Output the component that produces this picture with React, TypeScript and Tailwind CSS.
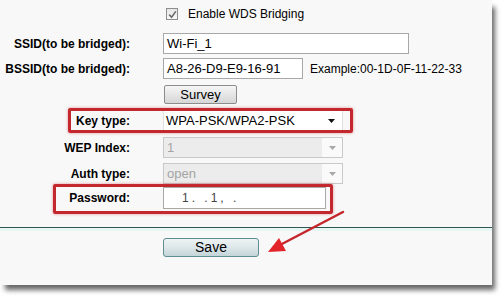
import React from 'react';

const font = { fontFamily: '"Liberation Sans", Arial, sans-serif' };

function Label({ children }: { children: React.ReactNode }) {
  return (
    <div className="w-[130px] shrink-0 text-right text-[12px] font-bold text-black leading-none">
      {children}
    </div>
  );
}

function Arrow({ disabled }: { disabled?: boolean }) {
  return (
    <svg width="7" height="4" viewBox="0 0 7 4" className="shrink-0">
      <path d="M0 0 L7 0 L3.5 4 Z" fill={disabled ? '#a8a8a8' : '#111'} />
    </svg>
  );
}

function DisabledSelect({ value }: { value: string }) {
  return (
    <div className="ml-[33px] flex h-[21px] w-[180px] border border-[#c9c9c9] bg-[#fafafa]">
      <div className="flex flex-1 items-center bg-[#ececec] pl-[3px] text-[13px] text-[#a3a3a3]">
        {value}
      </div>
      <div className="flex w-[20px] items-center justify-center">
        <Arrow disabled />
      </div>
    </div>
  );
}

export default function App() {
  return (
    <div className="w-[502px] h-[296px] bg-white overflow-hidden" style={font}>
      <div className="relative w-[492px] h-[285px] bg-[#f8f8f8] shadow-[4px_6px_5px_-1px_rgba(0,0,0,0.6)]">
        <div className="flex flex-col pt-[7px]">
          {/* enable wds */}
          <div className="flex h-[14px] items-center pl-[166px]">
            <div className="flex h-[12px] w-[12px] items-center justify-center border border-[#8d8d8d] bg-gradient-to-b from-[#e6e6e6] to-[#fafafa]">
              <svg width="9" height="9" viewBox="0 0 9 9">
                <path d="M1.2 4.6 L3.6 7.2 L7.8 1.4" stroke="#6b6b6b" strokeWidth="1.6" fill="none" />
              </svg>
            </div>
            <span className="ml-[10px] text-[12px] text-black">Enable WDS Bridging</span>
          </div>

          <div className="mt-[12px] flex h-[21px] items-center">
            <Label>SSID(to be bridged):</Label>
            <div className="ml-[33px] flex h-[21px] w-[246px] items-center border border-[#a8a8a8] bg-white pl-[3px] text-[13px] text-black">
              Wi-Fi_1
            </div>
          </div>

          <div className="mt-[4px] flex h-[21px] items-center">
            <Label>BSSID(to be bridged):</Label>
            <div className="ml-[33px] flex h-[21px] w-[140px] items-center border border-[#a8a8a8] bg-white pl-[3px] text-[13px] text-black">
              A8-26-D9-E9-16-91
            </div>
            <span className="ml-[7px] text-[12px] text-black">Example:00-1D-0F-11-22-33</span>
          </div>

          <div className="mt-[6px] flex h-[19px] items-center pl-[164px]">
            <div className="flex h-[19px] w-[73px] items-center justify-center rounded-[2px] border border-[#8c8c8c] bg-gradient-to-b from-[#f6f6f6] to-[#d6d6d6] text-[13px] text-black">
              Survey
            </div>
          </div>

          <div className="mt-[6px] flex h-[21px] items-center">
            <Label>Key type:</Label>
            <div className="ml-[33px] flex h-[21px] w-[180px] items-center justify-between border border-[#e0e0e0] bg-white pl-[2px] pr-[7px] text-[13px] text-black">
              WPA-PSK/WPA2-PSK
              <Arrow />
            </div>
          </div>

          <div className="mt-[6px] flex h-[21px] items-center">
            <Label>WEP Index:</Label>
            <DisabledSelect value="1" />
          </div>

          <div className="mt-[5px] flex h-[21px] items-center">
            <Label>Auth type:</Label>
            <DisabledSelect value="open" />
          </div>

          <div className="mt-[3px] flex h-[22px] items-center">
            <Label>Password:</Label>
            <div className="ml-[33px] flex h-[22px] w-[163px] items-center border border-[#a8a8a8] bg-white pl-[18px] text-[12px] text-[#444] tracking-[3px]">
              1. .1, .
            </div>
          </div>

          {/* divider */}
          <div className="mt-[18px] h-[1px] w-full bg-[#2f5650]" />
          <div className="h-[3px] w-full bg-[#e6f6f3]" />

          <div className="mt-[7px] flex h-[19px] items-center pl-[163px]">
            <div className="flex h-[19px] w-[96px] items-center justify-center rounded-[3px] border border-[#5e8d92] bg-gradient-to-b from-[#eef3f4] via-[#dde7ea] to-[#c4d4d8] text-[14px] text-black">
              Save
            </div>
          </div>
        </div>

        {/* annotations */}
        <div className="absolute left-[68px] top-[108px] h-[25px] w-[285px] rounded-[2px] border-[3px] border-[#c4282f] shadow-[0_0_3px_rgba(200,40,40,0.5)]" />
        <div className="absolute left-[53px] top-[184px] h-[30px] w-[280px] rounded-[2px] border-[3px] border-[#c4282f] shadow-[0_0_3px_rgba(200,40,40,0.5)]" />
        <svg className="absolute left-0 top-0" width="492" height="285" viewBox="0 0 492 285">
          <line x1="343" y1="212" x2="280" y2="245" stroke="#c4262c" strokeWidth="2.5" strokeLinecap="round" />
          <path d="M268 252 L279 238 L286 251 Z" fill="#e2232a" />
        </svg>
      </div>
    </div>
  );
}
